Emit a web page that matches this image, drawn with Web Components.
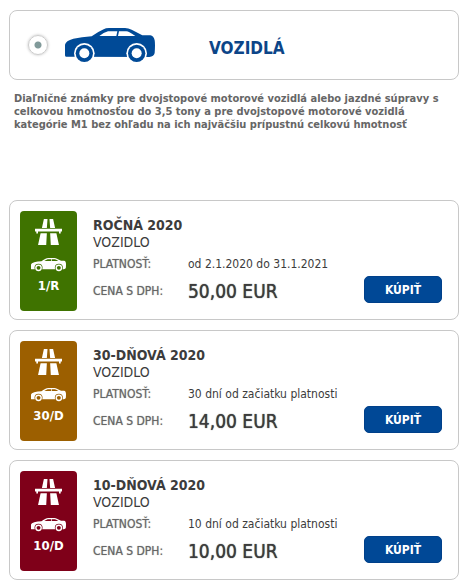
<!DOCTYPE html>
<html lang="sk">
<head>
<meta charset="utf-8">
<meta name="viewport" content="width=device-width, initial-scale=1">
<title>Diaľničné známky</title>
<style>
  body {
    margin: 10px 6px 6px 9px;
    background: #fff;
    color: #3c3c3c;
    font-family: "DejaVu Sans Condensed", Tahoma, "DejaVu Sans", sans-serif;
    font-size: 12px;
  }
</style>
</head>
<body>
<vignette-shop>
  <vehicle-option slot="category">Vozidlá</vehicle-option>
  <span slot="note">Diaľničné známky pre dvojstopové motorové vozidlá alebo jazdné súpravy s celkovou hmotnosťou do 3,5 tony a pre dvojstopové motorové vozidlá kategórie M1 bez ohľadu na ich najväčšiu prípustnú celkovú hmotnosť</span>
  <vignette-card style="--badge:#3f7300">
    <span slot="code">1/R</span><span slot="title">ROČNÁ 2020</span><span slot="kind">VOZIDLO</span>
    <span slot="validity">od 2.1.2020 do 31.1.2021</span><span slot="price">50,00 EUR</span>
  </vignette-card>
  <vignette-card style="--badge:#9c5f00">
    <span slot="code">30/D</span><span slot="title">30-DŇOVÁ 2020</span><span slot="kind">VOZIDLO</span>
    <span slot="validity">30 dní od začiatku platnosti</span><span slot="price">14,00 EUR</span>
  </vignette-card>
  <vignette-card style="--badge:#7f0019">
    <span slot="code">10/D</span><span slot="title">10-DŇOVÁ 2020</span><span slot="kind">VOZIDLO</span>
    <span slot="validity">10 dní od začiatku platnosti</span><span slot="price">10,00 EUR</span>
  </vignette-card>
</vignette-shop>

<script>
const define = (name, html) => customElements.define(name, class extends HTMLElement {
  constructor() {
    super();
    this.attachShadow({ mode: 'open' }).innerHTML = html;
  }
});

define('car-icon', `
  <style>
    :host { display: block; }
    svg { display: block; width: 100%; height: auto; }
    .cut { fill: var(--cut, #fff); }
  </style>
  <svg viewBox="0 0 270 102" fill="currentColor" aria-hidden="true">
    <path d="M3 86Q0 86 0 82V50Q2 38 25 32Q50 27 80 25Q98 12 116 4Q122 0 132 0H180Q190 0 200 5L232 22H256Q266 23 269 37Q271 48 269 75Q267 86 253 87Z"/>
    <path class="cut" d="M103 24Q116 13 129 10H157L154 24ZM162 10H184Q192 10 211 24H159Z"/>
    <circle class="cut" cx="58" cy="76" r="31"/><circle class="cut" cx="215" cy="76" r="31"/>
    <circle cx="58" cy="76" r="26"/><circle cx="215" cy="76" r="26"/>
    <circle class="cut" cx="58" cy="76" r="15"/><circle class="cut" cx="215" cy="76" r="15"/>
  </svg>`);

define('motorway-icon', `
  <style>
    :host { display: block; }
    svg { display: block; width: 100%; height: auto; }
  </style>
  <svg viewBox="0 0 82 80" fill="currentColor" aria-hidden="true">
    <path d="M27 0H38L36 27H21ZM44 0H55L61 27H46ZM0 30H82V38H78V44H73V38H9V44H4V38H0ZM17 43H36L34 80H9ZM46 43H65L73 80H48Z"/>
  </svg>`);

define('vehicle-option', `
  <style>
    :host { display: block; }
    label {
      display: grid; grid-template-columns: 20px 90px 1fr; column-gap: 17px; align-items: center;
      box-sizing: border-box; min-height: 70px; padding: 0 18px;
      border: 1px solid #c8c8c8; border-radius: 8px;
      color: #004a97; cursor: pointer;
    }
    input {
      appearance: none; width: 20px; height: 20px; margin: 0;
      border: 1px solid #ccc; border-radius: 50%;
      background: radial-gradient(circle, #819a9a 0 3px, #fff 4px);
      box-shadow: 0 0 3px #bbb;
    }
    b { padding: 6px 0 0 37px; font-size: 17px; line-height: 20px; text-transform: uppercase; color: #0c4588; }
  </style>
  <label>
    <input type="radio" name="category" checked>
    <car-icon></car-icon>
    <b><slot></slot></b>
  </label>`);

define('vignette-card', `
  <style>
    :host { display: block; }
    article {
      display: grid; grid-template-columns: 57px 1fr auto; column-gap: 16px;
      padding: 10px 16px 8px 10px;
      border: 1px solid #c8c8c8; border-radius: 8px;
    }
    .badge {
      --cut: var(--badge);
      display: flex; flex-direction: column; align-items: center;
      box-sizing: border-box; min-height: 100px; padding-top: 8px;
      border-radius: 4px; background: var(--badge); color: #fff;
    }
    motorway-icon { width: 27px; }
    car-icon { width: 35px; margin: 13px 0 6px; }
    .badge b { font-size: 13px; line-height: 16px; }
    h2 { margin: 6px 0 0; font-size: 14px; line-height: 17px; }
    p { margin: 0; font-size: 14px; line-height: 17px; }
    dl { display: grid; grid-template-columns: 95px 1fr; align-items: center; margin: 2px 0 0; }
    dt { color: #666; text-shadow: 0 0 1px #999; }
    dd { margin: 0; font-size: 12px; }
    dt, dd { line-height: 22px; white-space: nowrap; }
    .price { font-size: 19px; line-height: 32px; text-shadow: 0 0 1px #3c3c3c; }
    button {
      align-self: end; min-width: 78px; height: 27px; margin: 0 0 8px; padding: 0 12px;
      border: 1px solid #00408a; border-radius: 5px;
      background: #004896; color: #fff; font: bold 12px/20px "DejaVu Sans Condensed", Tahoma, sans-serif;
      cursor: pointer;
    }
  </style>
  <article>
    <div class="badge">
      <motorway-icon></motorway-icon>
      <car-icon></car-icon>
      <b><slot name="code"></slot></b>
    </div>
    <div>
      <h2><slot name="title"></slot></h2>
      <p><slot name="kind"></slot></p>
      <dl>
        <dt>PLATNOSŤ:</dt><dd><slot name="validity"></slot></dd>
        <dt>CENA S DPH:</dt><dd class="price"><slot name="price"></slot></dd>
      </dl>
    </div>
    <button type="button">KÚPIŤ</button>
  </article>`);

define('vignette-shop', `
  <style>
    :host { display: block; }
    .note { margin: 12px 20px 69px 5px; color: #666; font-size: 11px; font-weight: bold; line-height: 13px; }
    .list { display: grid; gap: 10px; }
  </style>
  <main>
    <slot name="category"></slot>
    <p class="note"><slot name="note"></slot></p>
    <div class="list"><slot></slot></div>
  </main>`);
</script>
</body>
</html>
